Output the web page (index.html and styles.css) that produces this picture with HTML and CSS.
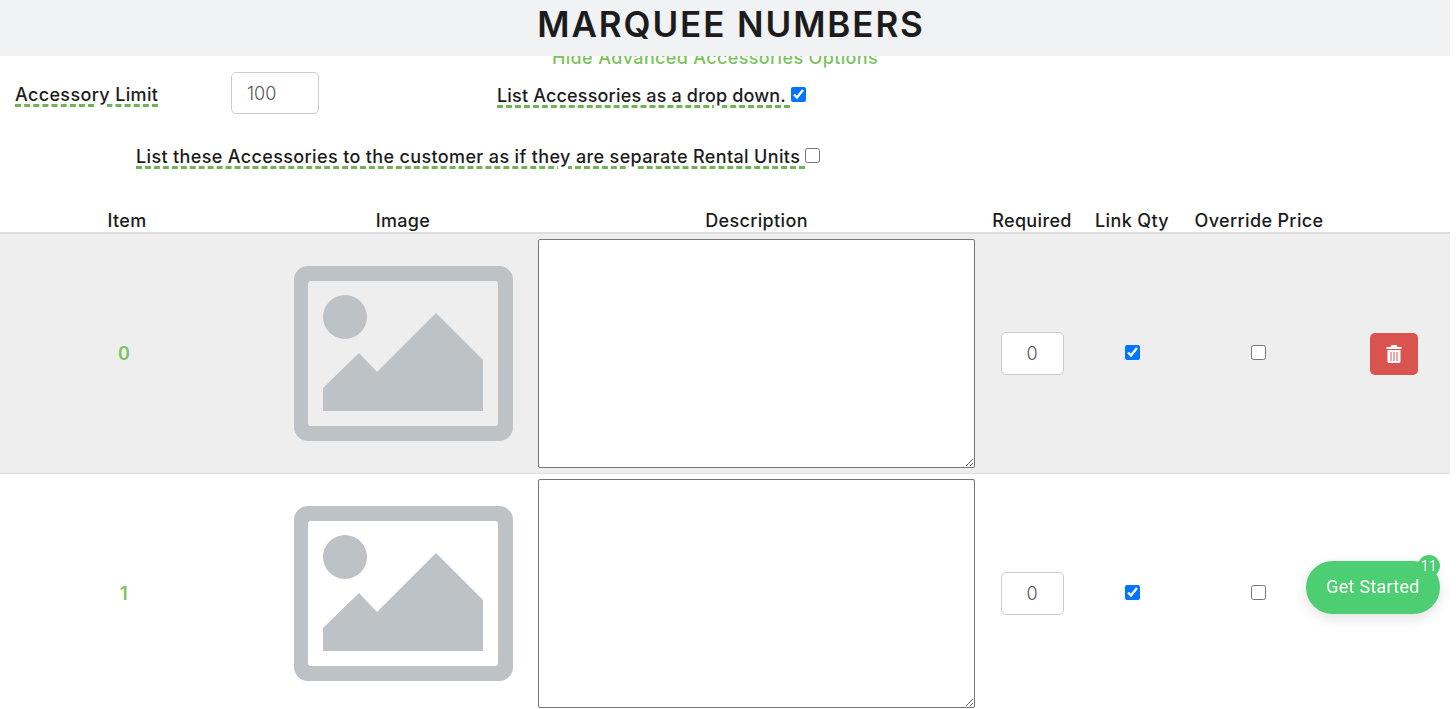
FILE: index.html
```html
<!DOCTYPE html>
<html lang="en">
<head>
    <meta charset="UTF-8">
    <meta name="viewport" content="width=device-width, initial-scale=1.0">
    <title>Marquee Numbers</title>
    <link rel="stylesheet" href="styles.css">
</head>
<body>
    <header class="page-title">
        <h1>MARQUEE NUMBERS</h1>
    </header>
    <a class="toggle-link" href="#">Hide Advanced Accessories Options</a>

    <div class="option-row option-row-first">
        <span class="hint limit-label">Accessory Limit</span>
        <input class="limit-input" type="text" placeholder="100">
        <label class="dropdown-option"><span class="hint">List Accessories as a drop down. </span><input type="checkbox" checked></label>
    </div>
    <div class="option-row option-row-second">
        <label><span class="hint">List these Accessories to the customer as if they are separate Rental Units </span><input type="checkbox"></label>
    </div>

    <div class="grid-row head-row">
        <div>Item</div>
        <div class="image-cell">Image</div>
        <div>Description</div>
        <div>Required</div>
        <div>Link Qty</div>
        <div>Override Price</div>
    </div>

    <div class="grid-row item-row item-row-alt">
        <div class="item-no">0</div>
        <div class="image-cell">
            <svg class="placeholder" viewBox="0 0 219 175"><path fill-rule="evenodd" d="M14 0H205A14 14 0 0 1 219 14V161A14 14 0 0 1 205 175H14A14 14 0 0 1 0 161V14A14 14 0 0 1 14 0ZM17 15A3 3 0 0 0 14 18V157A3 3 0 0 0 17 160H201A3 3 0 0 0 204 157V18A3 3 0 0 0 201 15Z"/><circle cx="51" cy="51" r="22"/><path d="M29 122L65 87L83 106L142 47L189 94V145H29Z"/></svg>
        </div>
        <div><textarea class="desc"></textarea></div>
        <div><input class="qty" type="text" placeholder="0"></div>
        <div><input type="checkbox" checked></div>
        <div class="override-cell"><input type="checkbox"></div>
        <div>
            <button class="delete-btn" type="button">
                <svg viewBox="0 0 16 18" width="16" height="18"><path fill="#fff" d="M5.5 0H10.500L11.500 2H15.500V4H.5V2H4.500ZM1.500 5H14.500V16.500A1.500 1.500 0 0 1 13 18H3A1.500 1.500 0 0 1 1.500 16.500ZM4.500 7V16H5.500V7ZM7.500 7V16H8.500V7ZM10.500 7V16H11.500V7Z" fill-rule="evenodd"/></svg>
            </button>
        </div>
    </div>

    <div class="grid-row item-row">
        <div class="item-no">1</div>
        <div class="image-cell">
            <svg class="placeholder" viewBox="0 0 219 175"><path fill-rule="evenodd" d="M14 0H205A14 14 0 0 1 219 14V161A14 14 0 0 1 205 175H14A14 14 0 0 1 0 161V14A14 14 0 0 1 14 0ZM17 15A3 3 0 0 0 14 18V157A3 3 0 0 0 17 160H201A3 3 0 0 0 204 157V18A3 3 0 0 0 201 15Z"/><circle cx="51" cy="51" r="22"/><path d="M29 122L65 87L83 106L142 47L189 94V145H29Z"/></svg>
        </div>
        <div><textarea class="desc"></textarea></div>
        <div><input class="qty" type="text" placeholder="0"></div>
        <div><input type="checkbox" checked></div>
        <div class="override-cell"><input type="checkbox"></div>
        <div></div>
    </div>

    <a class="get-started" href="#">Get Started<span class="badge">11</span></a>
</body>
</html>
```

FILE: styles.css
```css
html {
    overflow: hidden;
}
body {
    margin: 0;
    width: 1450px;
    font-family: Inter, "Liberation Sans", sans-serif;
    font-size: 18px;
    font-weight: 500;
    letter-spacing: .35px;
    color: #1c1c1c;
    background: #fff;
}
.page-title {
    position: relative;
    z-index: 2;
    box-sizing: border-box;
    width: 1456px;
    height: 56px;
    padding-left: 6px;
    background: #f1f2f4;
    text-align: center;
}
h1 {
    margin: 0;
    font-size: 35px;
    font-weight: 600;
    letter-spacing: 1.9px;
    line-height: 48px;
}
.toggle-link {
    display: block;
    height: 16px;
    margin-top: -10px;
    padding-right: 20px;
    text-align: center;
    color: #7bc35c;
    font-size: 18px;
    line-height: 24px;
    text-decoration: none;
}
.hint {
    text-decoration: underline dashed #72b257 3px;
    text-underline-offset: 3px;
}
.option-row {
    display: flex;
    align-items: center;
}
.option-row-first {
    height: 42px;
    margin-top: 10px;
    padding-left: 15px;
}
.limit-label {
    width: 216px;
    margin-top: 2px;
}
.limit-input {
    box-sizing: border-box;
    width: 88px;
    height: 42px;
    padding: 0 15px;
    border: 1px solid #ccc;
    border-radius: 5px;
    font: inherit;
    font-weight: 300;
}
.dropdown-option {
    margin-left: 178px;
    margin-top: 4px;
    letter-spacing: .17px;
}
.option-row-second {
    margin-top: 32px;
    padding-left: 136px;
    letter-spacing: .355px;
}
input[type="checkbox"] {
    width: 15px;
    height: 15px;
    margin: 0;
}
input::placeholder {
    color: #555;
}
.grid-row {
    display: grid;
    grid-template-columns: 254px 284px 437px 114px 86px 168px 101px;
    text-align: center;
}
.head-row {
    height: 23px;
    margin-top: 35px;
    padding-top: 7px;
    border-bottom: 2px solid #ddd;
    line-height: 23px;
}
.image-cell {
    padding-left: 14px;
}
.override-cell {
    padding-right: 2px;
}
.item-row {
    height: 239px;
    align-items: center;
    border-bottom: 1px solid #ddd;
}
.item-row-alt {
    background: #eee;
}
.item-no {
    padding-right: 6px;
    color: #7bc35c;
    font-weight: 600;
}
.placeholder {
    display: block;
    width: 219px;
    height: 175px;
    margin: 0 auto;
    fill: #bcc2c6;
}
.desc {
    display: block;
    box-sizing: border-box;
    width: 437px;
    height: 229px;
    border: 1px solid #767676;
    border-radius: 2px;
}
.qty {
    box-sizing: border-box;
    width: 63px;
    height: 43px;
    border: 1px solid #ccc;
    border-radius: 5px;
    font: inherit;
    font-weight: 300;
    text-align: center;
}
.delete-btn {
    display: inline-flex;
    align-items: center;
    justify-content: center;
    width: 48px;
    height: 42px;
    padding: 0;
    border: none;
    border-radius: 5px;
    background: #d9534f;
}
.get-started {
    position: fixed;
    left: 1306px;
    top: 561px;
    width: 134px;
    height: 53px;
    border-radius: 27px;
    background: #4dce72;
    box-shadow: 0 4px 14px rgba(0,0,0,0.12);
    color: #fff;
    font-family: Roboto, sans-serif;
    font-size: 18px;
    font-weight: 400;
    letter-spacing: .25px;
    line-height: 51px;
    text-align: center;
    text-decoration: none;
}
.badge {
    position: absolute;
    right: 0;
    top: -6px;
    width: 22px;
    height: 22px;
    border-radius: 50%;
    background: #4dce72;
    font-size: 14px;
    line-height: 22px;
}
```
